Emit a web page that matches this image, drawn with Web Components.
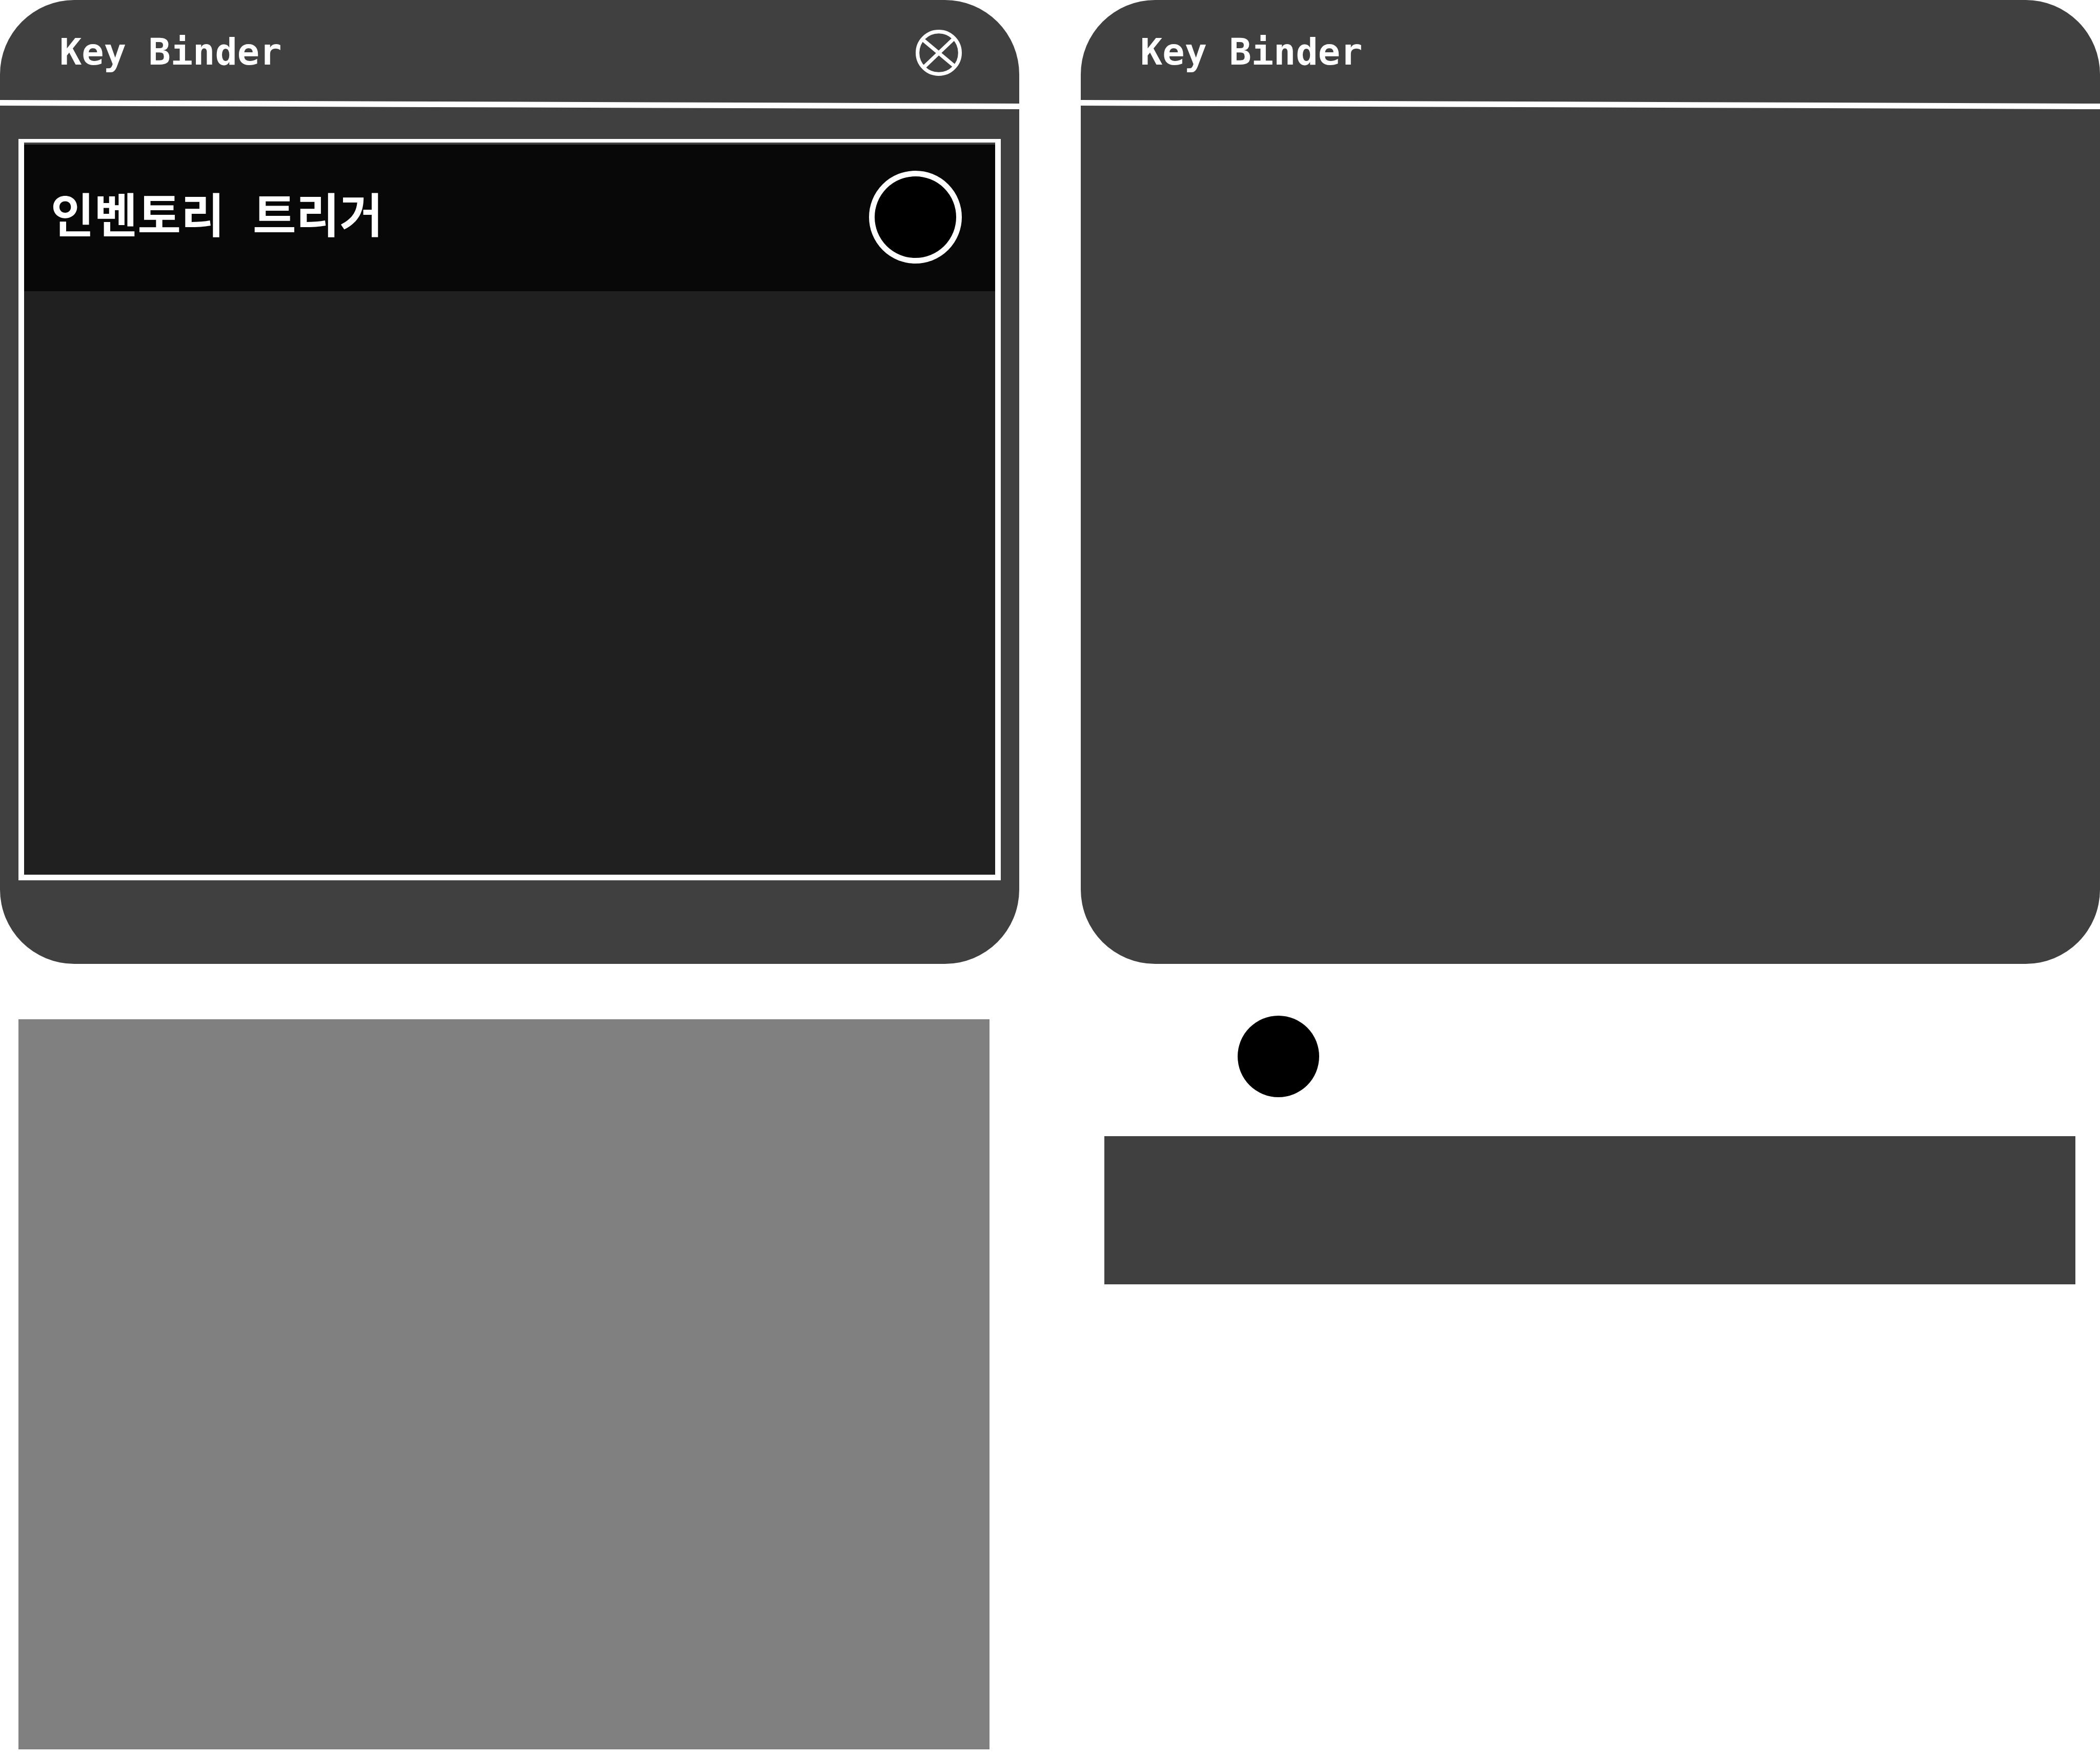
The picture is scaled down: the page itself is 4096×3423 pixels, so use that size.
<!DOCTYPE html>
<html lang="ko">
<head>
<meta charset="utf-8">
<meta name="viewport" content="width=device-width, initial-scale=1">
<title>Key Binder</title>
<style>
  body { margin: 0; background: #fff; }
</style>
</head>
<body>
<kb-sheet>
  <kb-window slot="left" heading="Key Binder">
    <kb-close slot="action"></kb-close>
    <kb-list>
      <kb-binding>인벤토리 트리거</kb-binding>
    </kb-list>
  </kb-window>
  <kb-list-swatch slot="left"></kb-list-swatch>
  <kb-window slot="right" heading="Key Binder"></kb-window>
  <kb-row-swatch slot="right"></kb-row-swatch>
</kb-sheet>

<script>
const define = (name, html, setup) => {
  const template = document.createElement('template');
  template.innerHTML = html;
  customElements.define(name, class extends HTMLElement {
    constructor() {
      super();
      this.attachShadow({ mode: 'open' }).append(template.content.cloneNode(true));
    }
    connectedCallback() { if (setup) setup(this); }
  });
};

// Two equal columns of windows and loose parts
define('kb-sheet', `
  <style>
    :host {
      display: grid; grid-template-columns: 1fr 1fr; column-gap: 120px;
      font-family: "DejaVu Sans Mono", "Noto Sans CJK KR", monospace;
      color: #fff;
    }
    .column { display: flex; flex-direction: column; min-width: 0; }
  </style>
  <div class="column"><slot name="left"></slot></div>
  <div class="column"><slot name="right"></slot></div>
`);

// Rounded window with a title bar and a slightly sloping divider
define('kb-window', `
  <style>
    :host {
      display: flex; flex-direction: column; box-sizing: border-box;
      min-height: 1880px; border-radius: 145px;
      background: #404040; overflow: hidden;
    }
    header {
      display: flex; align-items: center; justify-content: space-between;
      box-sizing: border-box; height: 195px; padding: 10px 112px 0 116px;
    }
    h1 { margin: 0; font-size: 72px; font-weight: 700; line-height: 80px; padding-bottom: 4px; }
    .divider { display: block; width: 100%; height: 18px; }
    .body { padding: 58px 36px 0; }
  </style>
  <header><h1></h1><slot name="action"></slot></header>
  <svg class="divider" viewBox="0 0 1988 18" preserveAspectRatio="none" aria-hidden="true">
    <path d="M0 0 L1988 7 V18 L0 11 Z" fill="#fff"/>
  </svg>
  <div class="body"><slot></slot></div>
`, el => { el.shadowRoot.querySelector('h1').textContent = el.getAttribute('heading'); });

define('kb-close', `
  <style>
    :host { display: block; }
    button { display: block; padding: 0; border: 0; background: none; color: inherit; cursor: pointer; }
    svg { display: block; width: 90px; height: 90px; }
  </style>
  <button type="button" aria-label="Close">
    <svg viewBox="0 0 100 100" fill="none" stroke="currentColor" stroke-width="8">
      <circle cx="50" cy="50" r="46"/>
      <path d="M15 21 L84 79 M82 20 L18 81"/>
    </svg>
  </button>
`);

define('kb-list', `
  <style>
    :host {
      display: block; box-sizing: border-box; min-height: 1446px;
      border: 11px solid #fff; border-top-width: 7px; background: #202020;
    }
  </style>
  <slot></slot>
`);

define('kb-binding', `
  <style>
    :host {
      display: flex; align-items: center; justify-content: space-between;
      box-sizing: border-box; height: 290px; padding: 0 65px 0 52px;
      background: #080808; box-shadow: inset 0 4px #404040;
    }
    label { font-size: 92px; font-weight: 700; line-height: 120px; white-space: nowrap; }
    button {
      box-sizing: border-box; width: 181px; height: 181px; padding: 0;
      border: 11px solid #fff; border-radius: 50%; background: #000; cursor: pointer;
    }
  </style>
  <label for="key"><slot></slot></label>
  <button id="key" type="button"></button>
`);

define('kb-list-swatch', `
  <style>
    :host { display: block; height: 1424px; margin: 108px 58px 0 36px; background: #808080; }
  </style>
`);

define('kb-row-swatch', `
  <style>
    :host { display: flex; flex-direction: column; gap: 76px; margin: 101px 48px 0 46px; }
    .key { width: 159px; height: 159px; margin-left: 260px; border-radius: 50%; background: #000; }
    .row { height: 289px; background: #404040; }
  </style>
  <div class="key"></div>
  <div class="row"></div>
`);
</script>
</body>
</html>
